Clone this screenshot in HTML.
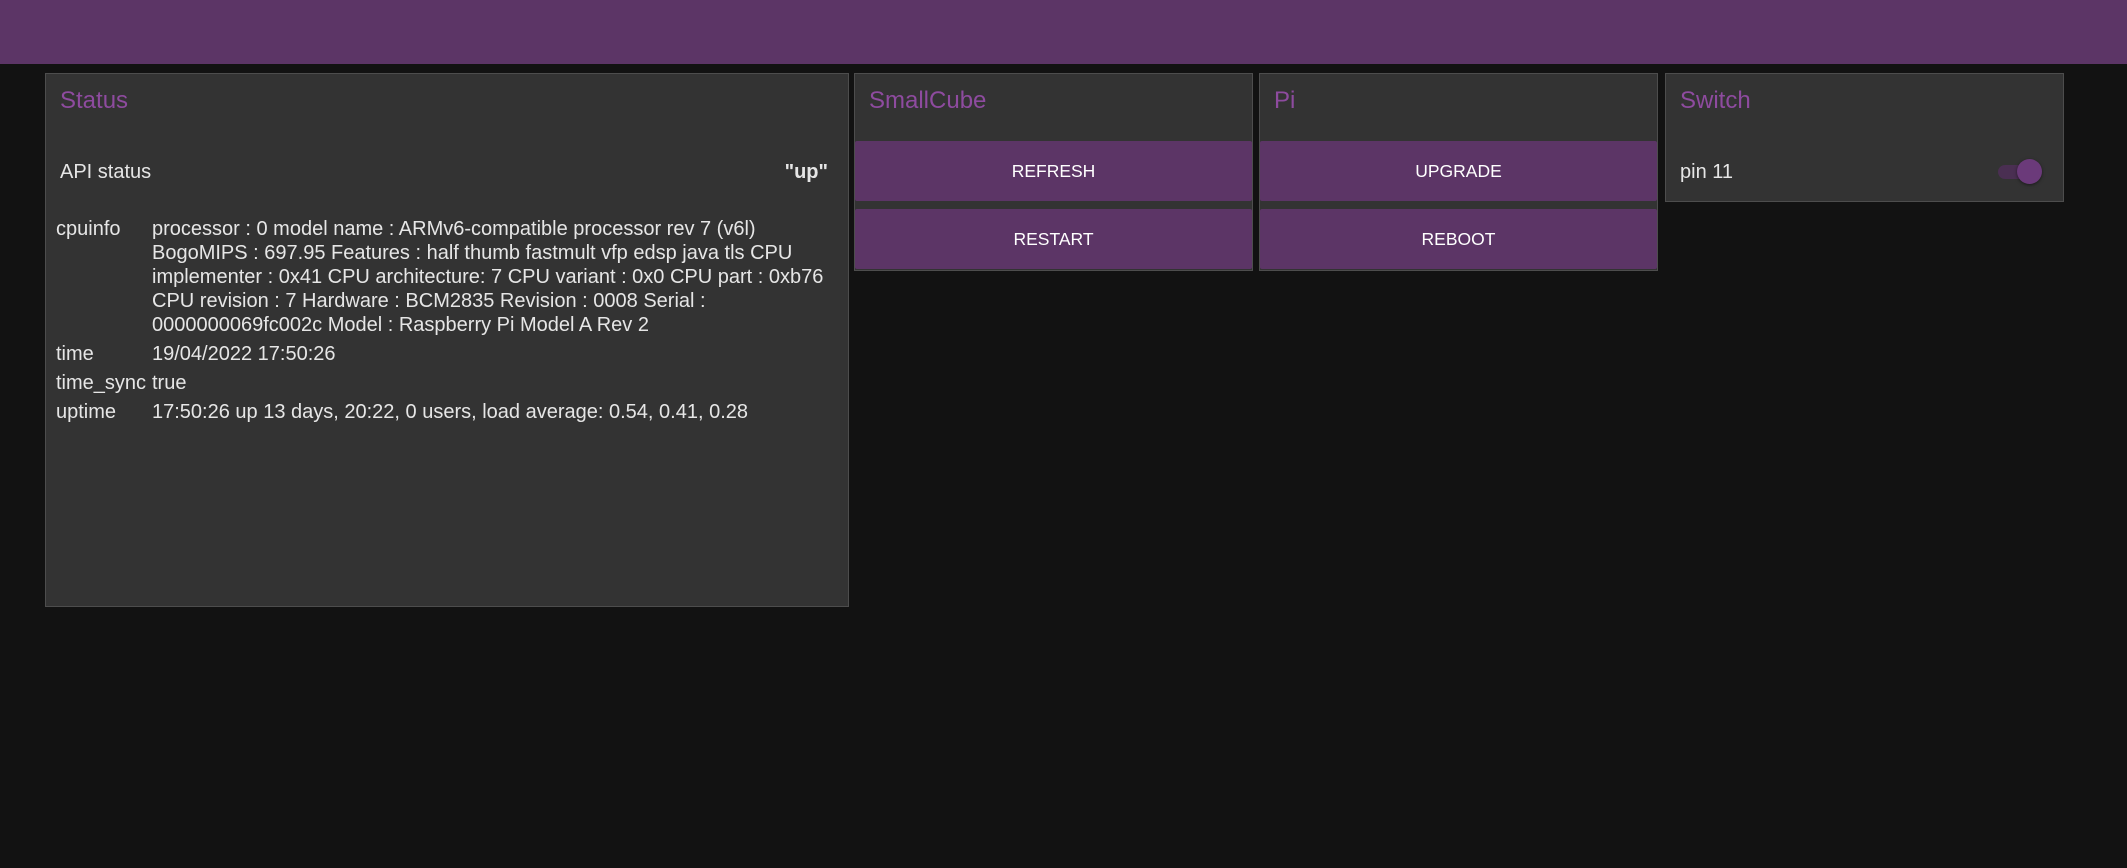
<!DOCTYPE html>
<html><head><meta charset="utf-8"><style>
*{box-sizing:border-box;margin:0;padding:0}
body{width:2127px;height:868px;background:#121212;font-family:"Liberation Sans",sans-serif;color:#e6e6e6;position:relative;overflow:hidden}
.hdr{position:absolute;left:0;top:0;width:2127px;height:64px;background:#5c3566}
.p{position:absolute;background:#333;border:1px solid #4d4d4d;top:73px}
.t{position:absolute;left:14px;top:13px;font-size:24px;color:#8e4b9f}
.btn{position:absolute;left:0;right:0;height:60px;background:#5c3566;color:#fff;font-size:17.5px;text-align:center;line-height:61px;border-radius:2px}
.row{position:absolute;left:14px;right:20px;top:86px;font-size:20px;line-height:24px}
table{position:absolute;left:8px;top:141px;width:790px;border-collapse:collapse;font-size:20px;line-height:24px}
td{vertical-align:top;padding:2px 0 3px 2px}
td.k{width:96px}
</style></head><body>
<div class="hdr"></div>
<div class="p" style="left:45px;width:804px;height:534px">
<div class="t">Status</div>
<div class="row">API status<b style="float:right">"up"</b></div>
<table>
<tr><td class="k">cpuinfo</td><td>processor : 0 model name : ARMv6-compatible processor rev 7 (v6l) BogoMIPS : 697.95 Features : half thumb fastmult vfp edsp java tls CPU implementer : 0x41 CPU architecture: 7 CPU variant : 0x0 CPU part : 0xb76 CPU revision : 7 Hardware : BCM2835 Revision : 0008 Serial : 0000000069fc002c Model : Raspberry Pi Model A Rev 2</td></tr>
<tr><td class="k">time</td><td>19/04/2022 17:50:26</td></tr>
<tr><td class="k">time_sync</td><td>true</td></tr>
<tr><td class="k">uptime</td><td>17:50:26 up 13 days, 20:22, 0 users, load average: 0.54, 0.41, 0.28</td></tr>
</table>
</div>
<div class="p" style="left:854px;width:399px;height:198px">
<div class="t">SmallCube</div>
<div class="btn" style="top:67px">REFRESH</div>
<div class="btn" style="top:135px">RESTART</div>
</div>
<div class="p" style="left:1259px;width:399px;height:198px">
<div class="t">Pi</div>
<div class="btn" style="top:67px">UPGRADE</div>
<div class="btn" style="top:135px">REBOOT</div>
</div>
<div class="p" style="left:1665px;width:399px;height:129px">
<div class="t">Switch</div>
<div class="row" style="top:86px">pin 11</div>
<div style="position:absolute;left:332px;top:91px;width:36px;height:14px;border-radius:7px;background:#4a2f52"></div>
<div style="position:absolute;left:351px;top:85px;width:25px;height:25px;border-radius:50%;background:#6b3a7a;box-shadow:0 1px 3px rgba(0,0,0,.5)"></div>
</div>
</body></html>
